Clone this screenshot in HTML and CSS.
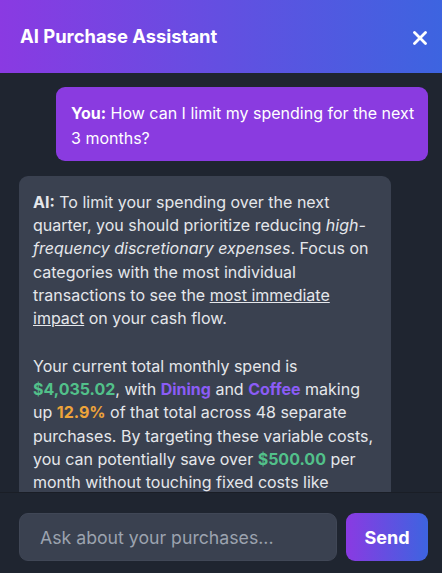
FILE: index.html
```html
<!DOCTYPE html>
<html lang="en">
<head>
    <meta charset="UTF-8">
    <meta name="viewport" content="width=device-width, initial-scale=1.0">
    <title>AI Purchase Assistant</title>
    <link rel="stylesheet" href="styles.css">
</head>
<body>
    <div class="chat">
        <div class="cabecera">
            <h1>AI Purchase Assistant</h1>
            <button class="cerrar" aria-label="Close">
                <svg width="14" height="14" viewBox="0 0 14 14">
                    <path d="M1.5 1.5 L12.5 12.5 M12.5 1.5 L1.5 12.5" stroke="#fff" stroke-width="2.8" stroke-linecap="round"/>
                </svg>
            </button>
        </div>

        <div class="mensajes">
            <!-- Pregunta del usuario -->
            <div class="mensaje usuario">
                <b>You:</b> How can I limit my spending for the next 3 months?
            </div>
            <!-- Respuesta del asistente -->
            <div class="mensaje ai">
                <p><b>AI:</b> To limit your spending over the next quarter, you should prioritize reducing <em>high-frequency discretionary expenses</em>. Focus on categories with the most individual transactions to see the <u>most immediate impact</u> on your cash flow.</p>
                <p>Your current total monthly spend is <span class="verde">$4,035.02</span>, with <span class="morado">Dining</span> and <span class="morado">Coffee</span> making up <span class="naranja">12.9%</span> of that total across 48 separate purchases. By targeting these variable costs, you can potentially save over <span class="verde">$500.00</span> per month without touching fixed costs like rent&nbsp;or utilities.</p>
            </div>
        </div>

        <div class="entrada">
            <input type="text" placeholder="Ask about your purchases...">
            <button class="enviar">Send</button>
        </div>
    </div>
</body>
</html>
```

FILE: styles.css
```css
body {
    margin: 0;
    padding: 0;
    font-family: Inter, "Noto Sans", sans-serif;
    background-color: #1f2530;
    color: #e5e7eb;
}
.chat {
    display: flex;
    flex-direction: column;
    height: 573px;
    overflow: hidden;
}
.cabecera {
    flex-shrink: 0;
    height: 73px;
    display: flex;
    align-items: center;
    justify-content: space-between;
    padding: 0 15px 0 20px;
    background: linear-gradient(90deg, #8a3ae2, #3d64e0);
}
.cabecera h1 {
    margin: 0 0 1px;
    font-size: 18.4px;
    font-weight: 700;
    color: #fff;
}
.cerrar {
    background: none;
    border: none;
    padding: 0;
    display: flex;
    margin-top: 3px;
    cursor: pointer;
}
.mensajes {
    flex: 1;
    min-height: 0;
    overflow: hidden;
    display: flex;
    flex-direction: column;
    gap: 15px;
    padding: 14px 14px 0 19px;
}
.mensaje {
    width: 372px;
    box-sizing: border-box;
    border-radius: 9px;
    font-size: 16px;
    flex-shrink: 0;
}
.mensaje.usuario {
    align-self: flex-end;
    background-color: #8a3be0;
    color: #fff;
    padding: 14px 12px 11px 15px;
    line-height: 24.6px;
}
.mensaje.ai {
    align-self: flex-start;
    background-color: #3a4150;
    padding: 14.5px 14px 14px;
    line-height: 23.35px;
}
.mensaje p {
    margin: 0 0 24px;
}
.verde {
    color: #52c08a;
    font-weight: 700;
}
.morado {
    color: #8b5cf6;
    font-weight: 700;
}
.naranja {
    color: #eea43a;
    font-weight: 700;
}
.entrada {
    flex-shrink: 0;
    display: flex;
    gap: 9px;
    padding: 20px 14px 12px 19px;
    border-top: 1px solid #1a1e26;
}
.entrada input {
    flex: 1;
    min-width: 0;
    height: 48px;
    box-sizing: border-box;
    border: 1px solid #404756;
    border-radius: 9px;
    background-color: #3a4150;
    padding: 0 20px;
    font-family: Inter, "Noto Sans", sans-serif;
    font-size: 17.7px;
    color: #fff;
    outline: none;
}
.entrada input::placeholder {
    color: #9ca3af;
}
.enviar {
    flex-shrink: 0;
    width: 82px;
    height: 48px;
    border: none;
    border-radius: 9px;
    background: linear-gradient(90deg, #8a3ae2, #3d64e0);
    color: #fff;
    font-family: Inter, "Noto Sans", sans-serif;
    font-size: 18px;
    font-weight: 700;
    cursor: pointer;
}
```
